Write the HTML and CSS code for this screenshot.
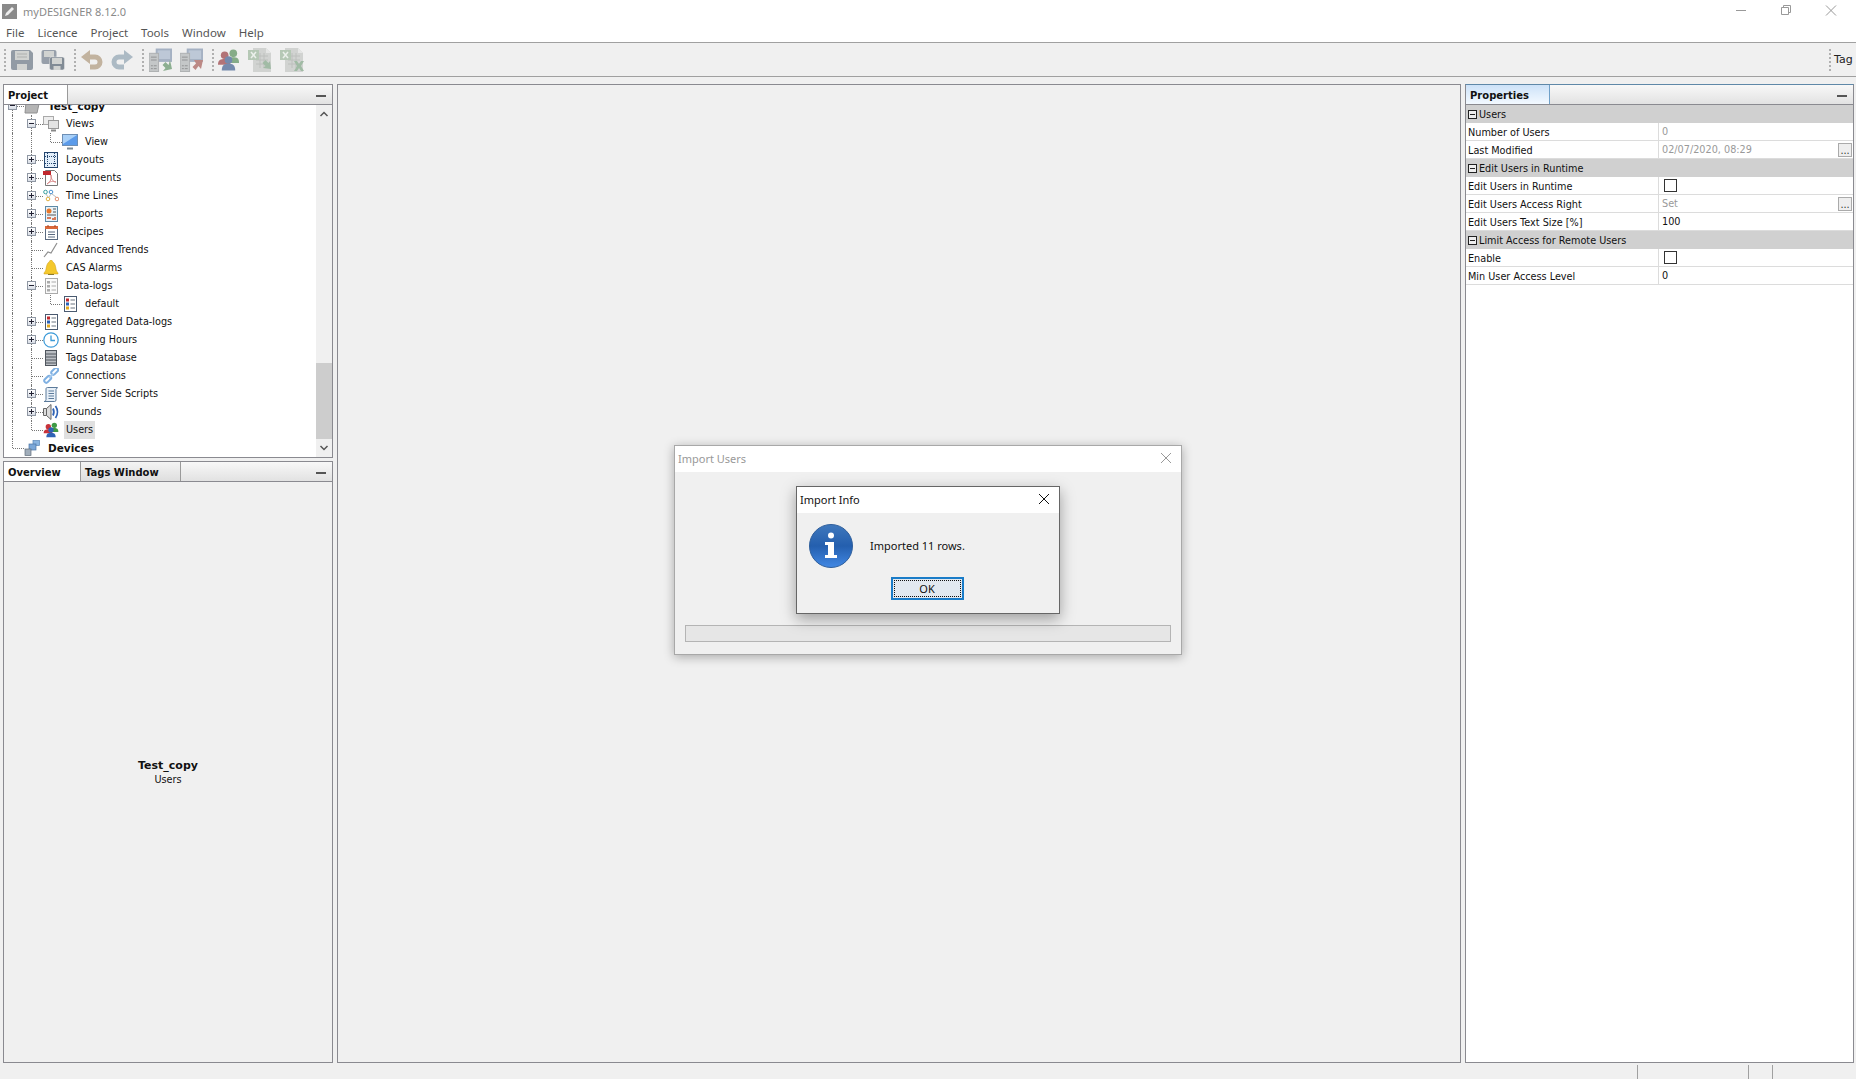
FILE: index.html
```html
<!DOCTYPE html>
<html lang="en">
<head>
    <meta charset="UTF-8">
    <title>myDESIGNER 8.12.0</title>
    <link rel="stylesheet" href="styles.css">
</head>
<body>
    <svg class="defs" width="0" height="0">
        <symbol id="i-list" viewBox="0 0 16 16">
            <rect x="2.500" y="0.500" width="12" height="15" fill="#fff" stroke="#4a5a70"/>
            <rect x="4" y="2.500" width="3" height="3" fill="#c0272d"/>
            <rect x="4" y="6.500" width="3" height="3" fill="#2b62b8"/>
            <rect x="4" y="10.500" width="3" height="3" fill="#e2a81e"/>
            <path d="M8.500 4h4.500M8.500 8h4.500M8.500 12h4.500" stroke="#6a7480"/>
        </symbol>
        <symbol id="i-users" viewBox="0 0 24 24">
            <circle cx="8" cy="7" r="4" fill="#c8323a"/>
            <path d="M1 17c0-5 3-6 7-6s6 2 6 6z" fill="#c8323a"/>
            <circle cx="17" cy="5" r="4" fill="#3f9a45"/>
            <path d="M11 15c0-5 2-6 6-6s6 1 6 6z" fill="#3f9a45"/>
            <circle cx="12" cy="12" r="4" fill="#2f62b5"/>
            <path d="M5 23c0-6 3-7 7-7s7 1 7 7z" fill="#2f62b5"/>
        </symbol>
        <symbol id="i-sheet" viewBox="0 0 24 24">
            <path d="M5 0h13l5 5v19H5z" fill="#c9cdc9"/>
            <path d="M18 0l5 5h-5z" fill="#e2e4e2"/>
            <path d="M8 8h12M8 12h12M8 16h12M12 5v15M16 5v15" stroke="#b0b4b0"/>
            <rect x="0" y="2" width="11" height="10" fill="#9cc39c"/>
            <path d="M3 4l5 6M8 4l-5 6" stroke="#e8f2e8" stroke-width="1.500"/>
        </symbol>
        <symbol id="i-server" viewBox="0 0 24 24">
            <rect x="7" y="0" width="17" height="14" fill="#8aa3c7"/>
            <rect x="9" y="2" width="13" height="9" fill="#a9c0de"/>
            <rect x="0" y="5" width="10" height="19" fill="#b9bdc0" stroke="#9ba0a4"/>
            <path d="M2 9h6M2 12h6M2 18h2M5 18h3M2 21h2M5 21h3" stroke="#777c80"/>
        </symbol>
    </svg>

    <header class="titlebar">
        <svg class="app-icon" width="15" height="15" viewBox="0 0 15 15">
            <rect width="15" height="15" fill="#8a8a8a"/>
            <path d="M3 12l1-3 6-6 2 2-6 6z" fill="#eee"/>
        </svg>
        <span class="app-title">myDESIGNER 8.12.0</span>
        <div class="win-btns">
            <svg width="45" height="20" viewBox="0 0 45 20"><path d="M18 10.500h10" stroke="#999"/></svg>
            <svg width="45" height="20" viewBox="0 0 45 20"><path d="M18.500 7.500h7v7h-7zM20.500 7.500v-2h7v7h-2" fill="none" stroke="#999"/></svg>
            <svg width="45" height="20" viewBox="0 0 45 20"><path d="M18 5.500l10 10M28 5.500l-10 10" stroke="#999"/></svg>
        </div>
    </header>

    <nav class="menubar">
        <span>File</span><span>Licence</span><span>Project</span><span>Tools</span><span>Window</span><span>Help</span>
    </nav>

    <div class="toolbar">
        <span class="grip"></span>
        <svg class="tool" width="22" height="20" viewBox="0 0 22 20">
            <path d="M2 0h17l3 3v15a2 2 0 0 1-2 2H2a2 2 0 0 1-2-2V2a2 2 0 0 1 2-2z" fill="#75879c"/>
            <rect x="4" y="1" width="14" height="9" fill="#c9ccc9"/>
            <path d="M6 4h10M6 7h10" stroke="#9aa0a0"/>
            <rect x="6" y="14" width="10" height="6" fill="#c9ccc9"/>
        </svg>
        <svg class="tool" width="24" height="20" viewBox="0 0 23 20">
            <rect width="15" height="14" rx="2" fill="#7b8da2"/>
            <rect x="2.500" y="1" width="10" height="6" fill="#c9ccc9"/>
            <rect x="8" y="7" width="15" height="13" rx="2" fill="#5f7389" stroke="#e8e8e8" stroke-width=".5"/>
            <rect x="10.500" y="8" width="10" height="6" fill="#c9ccc9"/>
            <rect x="12" y="16" width="7" height="4" fill="#c9ccc9"/>
        </svg>
        <span class="grip"></span>
        <svg class="tool" width="22" height="20" viewBox="0 0 22 20">
            <path d="M7 7h7a5 5 0 0 1 0 10h-5" fill="none" stroke="#c3a27a" stroke-width="5"/>
            <path d="M9 0L0 7l9 7z" fill="#c3a27a"/>
        </svg>
        <svg class="tool" width="22" height="20" viewBox="0 0 22 20">
            <path d="M15 7H8a5 5 0 0 0 0 10h5" fill="none" stroke="#93afc5" stroke-width="5"/>
            <path d="M13 0l9 7-9 7z" fill="#93afc5"/>
        </svg>
        <span class="grip"></span>
        <svg class="tool" width="23" height="24" viewBox="0 0 23 24">
            <use href="#i-server" width="23" height="24"/>
            <path d="M21 12l2 9-9 2 2.500-3-3-3 3-3 3 3z" fill="#5fa868"/>
        </svg>
        <svg class="tool" width="23" height="24" viewBox="0 0 23 24">
            <use href="#i-server" width="23" height="24"/>
            <path d="M14 12l9 0-2 9-2.500-3-3 4-3-3 3.500-3.500z" fill="#d2675f"/>
        </svg>
        <span class="grip"></span>
        <svg class="tool people" width="23" height="24" viewBox="0 0 24 24"><use href="#i-users" width="24" height="24"/></svg>
        <svg class="tool" width="24" height="24" viewBox="0 0 24 24">
            <use href="#i-sheet" width="24" height="24"/>
            <path d="M22 13l1 8-8-1 2.500-2-3-3 3-3 3 3z" fill="#7fb487"/>
        </svg>
        <svg class="tool" width="24" height="24" viewBox="0 0 24 24">
            <use href="#i-sheet" width="24" height="24"/>
            <path d="M14 13l3 0 2 3 2-3 3 0-3 5 3 5h-3l-2-3-2 3h-3l3-5z" fill="#7fb487"/>
        </svg>
        <div class="toolbar-end">
            <span class="grip"></span>
            <span class="tag-label">Tag</span>
        </div>
    </div>

    <main class="workspace">
        <div class="left-col">
            <section class="panel project-panel">
                <div class="panel-head">
                    <span class="tab tab-active tab-project">Project</span>
                    <span class="min-dash"></span>
                </div>
                <div class="tree-wrap">
                    <div class="tree">
                        <div class="row first bold"><span class="stem"><i class="exp minus"></i></span>
                            <svg width="16" height="16" viewBox="0 0 16 16"><path d="M2 4h5l1 2h7l-2 9H1z" fill="#b5b5b5" stroke="#909090"/></svg><b>Test_copy</b></div>

                        <div class="row"><span class="guide"></span><span class="stem"><i class="exp minus"></i></span>
                            <svg width="16" height="16" viewBox="0 0 16 16"><rect x="0.500" y="0.500" width="10" height="8" fill="#eee" stroke="#aaa"/><rect x="5.500" y="4.500" width="10" height="8" fill="#e4e4e4" stroke="#999"/><path d="M8 14.500h5" stroke="#888" stroke-width="2"/></svg><span class="lbl">Views</span></div>

                        <div class="row"><span class="guide"></span><span class="guide"></span><span class="stem end"></span>
                            <svg width="16" height="16" viewBox="0 0 16 16"><rect x="0.500" y="0.500" width="15" height="11" fill="#5b9bea" stroke="#6d8fb5"/><path d="M1 1h14L1 10z" fill="#a9d0f7"/><path d="M5 14.500h6" stroke="#7a8a95" stroke-width="2"/></svg><span class="lbl">View</span></div>

                        <div class="row"><span class="guide"></span><span class="stem"><i class="exp"></i></span>
                            <svg width="16" height="16" viewBox="0 0 16 16"><rect x="1.500" y="0.500" width="13" height="15" fill="#e2eefa" stroke="#24456e"/><path d="M4.500 1v14M11.500 1v14M2 4.500h12M2 11.500h12" stroke="#24456e" stroke-dasharray="1 1"/></svg><span class="lbl">Layouts</span></div>

                        <div class="row"><span class="guide"></span><span class="stem"><i class="exp"></i></span>
                            <svg width="16" height="16" viewBox="0 0 16 16"><path d="M2.500 0.500h9l3 3v12h-12z" fill="#fff" stroke="#777"/><rect x="0" y="1" width="8" height="4" fill="#c0272d"/><path d="M8 5c1 5-2 8-4 9 3-3 6-3 9-2-3 0-5-3-5-7z" fill="none" stroke="#d98a8a"/></svg><span class="lbl">Documents</span></div>

                        <div class="row"><span class="guide"></span><span class="stem"><i class="exp"></i></span>
                            <svg width="16" height="16" viewBox="0 0 16 16"><g fill="none"><circle cx="2.500" cy="4" r="1.800" stroke="#3aa0a0"/><circle cx="8" cy="4" r="1.800" stroke="#4a90d0"/><circle cx="5" cy="11" r="1.800" stroke="#e0b040"/><circle cx="14" cy="11" r="1.800" stroke="#e09070"/><path d="M3 6l2 3M8 6l-2 3M9 6l4 3" stroke="#bbb"/></g></svg><span class="lbl">Time Lines</span></div>

                        <div class="row"><span class="guide"></span><span class="stem"><i class="exp"></i></span>
                            <svg width="16" height="16" viewBox="0 0 16 16"><rect x="2.500" y="0.500" width="12" height="15" fill="#e8f2f8" stroke="#5d8aa8"/><circle cx="6" cy="5" r="2.500" fill="#e8782a"/><path d="M10 3h3M10 6h3M4 9h9" stroke="#555"/><path d="M10 14v-2M12 14v-3M4 12h4" stroke="#d0562a" stroke-width="1.500"/></svg><span class="lbl">Reports</span></div>

                        <div class="row"><span class="guide"></span><span class="stem"><i class="exp"></i></span>
                            <svg width="16" height="16" viewBox="0 0 16 16"><rect x="2.500" y="2.500" width="12" height="13" fill="#fff" stroke="#5a6a80"/><rect x="2" y="2" width="13" height="3" fill="#d9683a"/><path d="M5 1v2M12 1v2" stroke="#a04020"/><path d="M5 8h7M5 10.500h7M5 13h7" stroke="#5a6a80"/></svg><span class="lbl">Recipes</span></div>

                        <div class="row"><span class="guide"></span><span class="stem"></span>
                            <svg width="16" height="16" viewBox="0 0 16 16"><path d="M1 15l4-5 3 1 6-10" fill="none" stroke="#8f8f8f" stroke-width="1.200"/></svg><span class="lbl">Advanced Trends</span></div>

                        <div class="row"><span class="guide"></span><span class="stem"></span>
                            <svg width="16" height="16" viewBox="0 0 16 16"><path d="M8 0c1 0 1.500 1 1.500 1.500C12 3 12.500 6 13 9c.2 2 1.500 3 2 4v1H1v-1c.5-1 1.800-2 2-4 .5-3 1-6 3.500-7.500C6.500 1 7 0 8 0z" fill="#f4c82c" stroke="#c89a18" stroke-width=".5"/><path d="M5 14.500h6" stroke="#8a7a30"/></svg><span class="lbl">CAS Alarms</span></div>

                        <div class="row"><span class="guide"></span><span class="stem"><i class="exp minus"></i></span>
                            <svg width="16" height="16" viewBox="0 0 16 16"><rect x="2.500" y="0.500" width="12" height="15" fill="#fafafa" stroke="#aaa"/><path d="M4 3h3v2.500H4zM4 7h3v2.500H4zM4 11h3v2.500H4z" fill="#aaa"/><path d="M8.500 4h4.500M8.500 8h4.500M8.500 12h4.500" stroke="#aaa"/></svg><span class="lbl">Data-logs</span></div>

                        <div class="row"><span class="guide"></span><span class="guide"></span><span class="stem end"></span>
                            <svg width="16" height="16"><use href="#i-list"/></svg><span class="lbl">default</span></div>

                        <div class="row"><span class="guide"></span><span class="stem"><i class="exp"></i></span>
                            <svg width="16" height="16"><use href="#i-list"/></svg><span class="lbl">Aggregated Data-logs</span></div>

                        <div class="row"><span class="guide"></span><span class="stem"><i class="exp"></i></span>
                            <svg width="16" height="16" viewBox="0 0 16 16"><circle cx="8" cy="8" r="7.200" fill="#fff" stroke="#3b9ad8" stroke-width="1.200"/><path d="M8 3.500V8.500h4" fill="none" stroke="#3b9ad8" stroke-width="1.300"/></svg><span class="lbl">Running Hours</span></div>

                        <div class="row"><span class="guide"></span><span class="stem"></span>
                            <svg width="16" height="16" viewBox="0 0 16 16"><rect x="2.500" y="0.500" width="11" height="15" fill="#b9bdc2" stroke="#50565e"/><path d="M3 4h10M3 7h10M3 10h10M3 13h10" stroke="#50565e"/></svg><span class="lbl">Tags Database</span></div>

                        <div class="row"><span class="guide"></span><span class="stem"></span>
                            <svg width="16" height="16" viewBox="0 0 16 16"><g fill="none" stroke="#7fb0e2" stroke-width="2"><rect x="-3" y="-2" width="8" height="4" rx="2" transform="translate(4 12) rotate(-45)"/><rect x="-3" y="-2" width="8" height="4" rx="2" transform="translate(11 4) rotate(-45)"/><path d="M6 10l4-4" stroke="#a9ccef"/></g></svg><span class="lbl">Connections</span></div>

                        <div class="row"><span class="guide"></span><span class="stem"><i class="exp"></i></span>
                            <svg width="16" height="16" viewBox="0 0 16 16"><path d="M4.500 1.500h10l-1.500 2V14a1.500 1.500 0 0 1-1.500 1.500H1c1 0 2-1 2-2V3c0-1 .5-1.500 1.500-1.500z" fill="#e8f0f8" stroke="#5b7a9a"/><path d="M5.500 5h5.500M5.500 7.500h5.500M5.500 10h5.500M5.500 12.500h5.500" stroke="#5b7a9a"/></svg><span class="lbl">Server Side Scripts</span></div>

                        <div class="row"><span class="guide"></span><span class="stem"><i class="exp"></i></span>
                            <svg width="16" height="16" viewBox="0 0 16 16"><path d="M0.500 4.500h3l4.500-4v15l-4.500-4h-3z" fill="#ddd" stroke="#666"/><path d="M3.500 4.500v7" stroke="#666"/><path d="M10 4.500c1 2 1 5 0 7M12.500 2c2.500 3.500 2.500 8.500 0 12" fill="none" stroke="#2f62b5" stroke-width="1.800"/></svg><span class="lbl">Sounds</span></div>

                        <div class="row"><span class="guide"></span><span class="stem end"></span>
                            <svg width="16" height="16"><use href="#i-users"/></svg><span class="lbl lbl-sel">Users</span></div>

                        <div class="row bold"><span class="stem end"></span>
                            <svg width="16" height="16" viewBox="0 0 16 16"><rect x="9" y="0.500" width="6.500" height="5" fill="#8ab4e0" stroke="#5a86b8" stroke-width=".7"/><rect x="5" y="4" width="7" height="6" fill="#7ba7d8" stroke="#4a74a4" stroke-width=".7"/><rect x="1" y="9" width="6" height="6.500" fill="#a0adba" stroke="#5f6b78" stroke-width=".7"/></svg><b>Devices</b></div>
                    </div>
                    <div class="scrollbar">
                        <span class="sb-btn">
                            <svg width="10" height="6" viewBox="0 0 10 6"><path d="M1.500 5L5 1.500 8.500 5" fill="none" stroke="#555" stroke-width="1.500"/></svg>
                        </span>
                        <span class="sb-thumb"></span>
                        <span class="sb-btn">
                            <svg width="10" height="6" viewBox="0 0 10 6"><path d="M1.500 1L5 4.500 8.500 1" fill="none" stroke="#555" stroke-width="1.500"/></svg>
                        </span>
                    </div>
                </div>
            </section>

            <section class="panel overview-panel">
                <div class="panel-head">
                    <span class="tab tab-active tab-overview">Overview</span>
                    <span class="tab tab-tags">Tags Window</span>
                    <span class="min-dash"></span>
                </div>
                <div class="overview-body">
                    <strong>Test_copy</strong>
                    <span>Users</span>
                </div>
            </section>
        </div>

        <section class="panel canvas-panel"></section>

        <section class="panel props-panel">
            <div class="panel-head panel-head-blue">
                <span class="tab tab-props">Properties</span>
                <span class="min-dash"></span>
            </div>
            <div class="prop-group"><i class="box-minus"></i>Users</div>
            <div class="prop"><span class="prop-name">Number of Users</span><span class="prop-val off">0</span></div>
            <div class="prop"><span class="prop-name">Last Modified</span><span class="prop-val off">02/07/2020, 08:29<em class="dots">...</em></span></div>
            <div class="prop-group"><i class="box-minus"></i>Edit Users in Runtime</div>
            <div class="prop"><span class="prop-name">Edit Users in Runtime</span><span class="prop-val"><i class="check"></i></span></div>
            <div class="prop"><span class="prop-name">Edit Users Access Right</span><span class="prop-val off">Set<em class="dots">...</em></span></div>
            <div class="prop"><span class="prop-name">Edit Users Text Size [%]</span><span class="prop-val">100</span></div>
            <div class="prop-group"><i class="box-minus"></i>Limit Access for Remote Users</div>
            <div class="prop"><span class="prop-name">Enable</span><span class="prop-val"><i class="check"></i></span></div>
            <div class="prop"><span class="prop-name">Min User Access Level</span><span class="prop-val">0</span></div>
        </section>
    </main>

    <footer class="statusbar">
        <span class="status-cell cell-a"></span>
        <span class="status-cell cell-b"></span>
        <span class="status-cell cell-c"></span>
    </footer>

    <!-- dialogs float over the workspace -->
    <div class="dialog import-users">
        <div class="dialog-title dim">
            <span>Import Users</span>
            <svg width="12" height="12" viewBox="0 0 12 12"><path d="M1 1l10 10M11 1L1 11" stroke="#999"/></svg>
        </div>
        <div class="import-body">
            <div class="progress"></div>
        </div>
    </div>

    <div class="dialog import-info">
        <div class="dialog-title">
            <span>Import Info</span>
            <svg width="12" height="12" viewBox="0 0 12 12"><path d="M1 1l10 10M11 1L1 11" stroke="#111"/></svg>
        </div>
        <div class="info-msg">
            <svg width="44" height="44" viewBox="0 0 44 44">
                <defs>
                    <linearGradient id="info-fill" x1="0" y1="0" x2="0" y2="1">
                        <stop offset="0" stop-color="#3f78bd"/>
                        <stop offset="0.500" stop-color="#245fae"/>
                        <stop offset="1" stop-color="#4288e4"/>
                    </linearGradient>
                </defs>
                <circle cx="22" cy="22" r="21.500" fill="url(#info-fill)" stroke="#2f5f9c"/>
                <circle cx="22" cy="11.500" r="3" fill="#fff"/>
                <path d="M16 18h9v13h3v3H16v-3h3V21h-3z" fill="#fff"/>
            </svg>
            <span>Imported 11 rows.</span>
        </div>
        <div class="info-actions">
            <button class="ok-btn"><span>OK</span></button>
        </div>
    </div>
</body>
</html>
```

FILE: styles.css
```css
html, body {
    margin: 0;
    padding: 0;
}
body {
    position: relative;
    width: 1856px;
    height: 1079px;
    overflow: hidden;
    display: flex;
    flex-direction: column;
    background: #f0f0f0;
    font-family: "DejaVu Sans", sans-serif;
    font-size: 9.700px;
    color: #111;
}
svg {
    flex: none;
    display: block;
}
.defs {
    position: absolute;
}

/* title + menu */
.titlebar {
    height: 23px;
    background: #fff;
    display: flex;
    align-items: center;
    padding-left: 2px;
}
.app-title {
    margin-left: 6px;
    font: 11px "Noto Sans", sans-serif;
    color: #8a8a8a;
}
.win-btns {
    margin-left: auto;
    margin-right: 3px;
    display: flex;
    margin-top: -3px;
}
.menubar {
    height: 19px;
    background: #fff;
    display: flex;
    align-items: center;
    gap: 13px;
    padding-left: 6px;
    font: 11.500px "Noto Sans", sans-serif;
    color: #555;
}

/* toolbar */
.toolbar {
    height: 33px;
    border-top: 1px solid #a0a0a0;
    border-bottom: 1px solid #a0a0a0;
    background: #f0f0f0;
    display: flex;
    align-items: center;
    padding-left: 3px;
}
.grip {
    flex: none;
    width: 2px;
    height: 22px;
    margin: 0 5px 0 1px;
    background: repeating-linear-gradient(#b0b0b0 0 2px, transparent 2px 4px);
}
.tool {
    margin-right: 8px;
    opacity: .8;
    filter: saturate(.6);
}
.tool.people {
    margin-left: -2px;
    opacity: .7;
}
.toolbar-end {
    margin-left: auto;
    display: flex;
    align-items: center;
    width: 28px;
    overflow: hidden;
}
.toolbar-end .grip {
    margin: 0 3px 0 1px;
}
.tag-label {
    font-size: 11px;
    color: #222;
}

/* main area */
.workspace {
    height: 979px;
    padding: 7px 2px 0 3px;
    display: flex;
    gap: 3px;
}
.left-col {
    width: 330px;
    display: flex;
    flex-direction: column;
    gap: 3px;
}
.panel {
    box-sizing: border-box;
    border: 1px solid #8a8a90;
    display: flex;
    flex-direction: column;
}
.project-panel {
    height: 374px;
    background: #fff;
}
.overview-panel {
    flex: 1;
}
.canvas-panel {
    flex: 1;
    margin: 0 1px;
}
.props-panel {
    width: 389px;
    background: #fff;
    border-top-color: #5f88a8;
}
.panel-head {
    box-sizing: border-box;
    height: 20px;
    flex: none;
    display: flex;
    align-items: stretch;
    background: linear-gradient(#f8f8f8, #e2e2e2);
    border-bottom: 1px solid #8a8a90;
    position: relative;
}
.tab {
    box-sizing: border-box;
    display: flex;
    align-items: center;
    padding: 1px 0 0 4px;
    font-size: 10px;
    font-weight: bold;
    border-right: 1px solid #9a9a9a;
}
.tab-active {
    background: #fff;
}
.tab-project {
    width: 64px;
}
.tab-overview {
    width: 77px;
}
.tab-tags {
    width: 100px;
    background: linear-gradient(#f4f4f4, #dedede);
}
.tab-props {
    width: 84px;
    background: linear-gradient(#cde2f8, #f3f9ff);
    border-right-color: #6fa0c8;
}
.min-dash {
    position: absolute;
    right: 6px;
    top: 10px;
    width: 10px;
    height: 2px;
    background: #555;
}

/* project tree */
.tree-wrap {
    flex: 1;
    display: flex;
    min-height: 0;
}
.tree {
    flex: 1;
    overflow: hidden;
    padding-left: 8px;
}
.row {
    height: 18px;
    display: flex;
    align-items: center;
}
.row.first {
    margin-top: -8px;
}
.row b {
    margin-left: 8px;
    font-size: 10.500px;
}
.guide {
    box-sizing: border-box;
    align-self: stretch;
    width: 19px;
    border-left: 1px dotted #777;
}
.stem {
    box-sizing: border-box;
    position: relative;
    align-self: flex-start;
    width: 12px;
    height: 18px;
    border-left: 1px dotted #777;
}
.stem.end {
    height: 9px;
}
.stem::after {
    content: "";
    position: absolute;
    left: 0;
    top: 9px;
    width: 11px;
    border-top: 1px dotted #777;
}
.exp {
    box-sizing: border-box;
    position: absolute;
    left: -5px;
    top: 4px;
    width: 9px;
    height: 9px;
    z-index: 1;
    border: 1px solid #8f97a3;
    background: linear-gradient(#fff, #d8dde6);
}
.exp::before {
    content: "";
    position: absolute;
    left: 1px;
    top: 3px;
    width: 5px;
    height: 1px;
    background: #223;
}
.exp:not(.minus)::after {
    content: "";
    position: absolute;
    left: 3px;
    top: 1px;
    width: 1px;
    height: 5px;
    background: #223;
}
.lbl {
    margin-left: 7px;
    line-height: 18px;
}
.lbl-sel {
    background: #e0e0e0;
    padding: 0 2px;
    margin-left: 5px;
}
.scrollbar {
    width: 16px;
    background: #f0f0f0;
    display: flex;
    flex-direction: column;
}
.sb-btn {
    height: 17px;
    display: flex;
    align-items: center;
    justify-content: center;
}
.sb-thumb {
    margin-top: 241px;
    height: 76px;
    background: #cdcdcd;
}

/* overview */
.overview-body {
    flex: 1;
    display: flex;
    flex-direction: column;
    align-items: center;
    justify-content: center;
    gap: 2px;
}
.overview-body strong {
    font-size: 11px;
}

/* properties */
.prop-group {
    box-sizing: border-box;
    height: 18px;
    background: #d0d0d0;
    display: flex;
    align-items: center;
    padding-left: 2px;
}
.box-minus {
    box-sizing: border-box;
    position: relative;
    width: 9px;
    height: 9px;
    margin-right: 2px;
    border: 1px solid #222;
    background: #eee;
}
.box-minus::after {
    content: "";
    position: absolute;
    left: 1px;
    top: 3px;
    width: 5px;
    height: 1px;
    background: #222;
}
.prop {
    box-sizing: border-box;
    height: 18px;
    display: flex;
    border-bottom: 1px solid #dcdcdc;
    line-height: 19px;
}
.prop-name {
    box-sizing: border-box;
    width: 193px;
    padding-left: 2px;
    border-right: 1px solid #dcdcdc;
}
.prop-val {
    flex: 1;
    display: flex;
    align-items: center;
    padding-left: 3px;
    position: relative;
}
.prop-val.off {
    color: #999;
}
.check {
    box-sizing: border-box;
    width: 13px;
    height: 13px;
    margin-left: 2px;
    border: 1px solid #333;
    background: #fff;
}
.dots {
    box-sizing: border-box;
    position: absolute;
    right: 1px;
    top: 2px;
    width: 14px;
    height: 14px;
    border: 1px solid #aaa;
    background: #eee;
    font-style: normal;
    color: #333;
    text-align: center;
    line-height: 14px;
}

/* status */
.statusbar {
    height: 14px;
    margin-top: 2px;
    display: flex;
    justify-content: flex-end;
}
.status-cell {
    box-sizing: border-box;
    border-left: 1px solid #a0a0a0;
}
.cell-a {
    width: 111px;
}
.cell-b {
    width: 24px;
}
.cell-c {
    width: 84px;
}

/* dialogs */
.dialog {
    box-sizing: border-box;
    position: absolute;
    background: #f0f0f0;
    display: flex;
    flex-direction: column;
}
.import-users {
    left: 674px;
    top: 445px;
    width: 508px;
    height: 210px;
    border: 1px solid #a8a8a8;
    box-shadow: 0 2px 10px rgba(0, 0, 0, .3);
}
.import-info {
    left: 796px;
    top: 486px;
    width: 264px;
    height: 128px;
    border: 1px solid #666;
    box-shadow: 0 5px 14px rgba(0, 0, 0, .35);
}
.dialog-title {
    box-sizing: border-box;
    height: 26px;
    flex: none;
    background: #fff;
    display: flex;
    align-items: center;
    justify-content: space-between;
    padding: 0 9px 2px 3px;
    font: 11px "Noto Sans", sans-serif;
}
.dialog-title.dim {
    color: #999;
}
.import-body {
    flex: 1;
    display: flex;
    align-items: flex-end;
    padding: 0 10px 12px;
}
.progress {
    box-sizing: border-box;
    flex: 1;
    height: 17px;
    border: 1px solid #b4b4b4;
    background: #e6e6e6;
}
.info-msg {
    display: flex;
    align-items: center;
    gap: 17px;
    padding: 11px 0 0 12px;
    font: 11px "Noto Sans", sans-serif;
}
.info-msg span {
    margin-bottom: 2px;
}
.info-actions {
    display: flex;
    justify-content: center;
    padding: 9px 2px 0 0;
}
.ok-btn {
    box-sizing: border-box;
    width: 73px;
    height: 23px;
    padding: 1px;
    border: 2px solid #1a7cc8;
    background: #e2e9f0;
    font: 11px "Noto Sans", sans-serif;
    color: #111;
}
.ok-btn span {
    box-sizing: border-box;
    display: block;
    height: 100%;
    line-height: 15px;
    border: 1px dotted #111;
}
```
